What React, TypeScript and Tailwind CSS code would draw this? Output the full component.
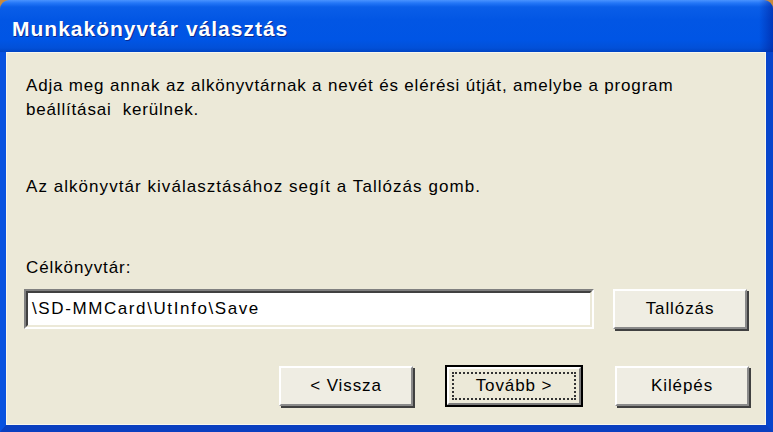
import React from "react";

function ClassicButton({
  label,
  def = false,
  className = "",
}: {
  label: string;
  def?: boolean;
  className?: string;
}) {
  if (def) {
    return (
      <div className={"h-[42px] border-2 border-black bg-[#ECE9D8] " + className}>
        <div className="h-full border-2 border-t-white border-l-white border-b-[#7c7c7c] border-r-[#7c7c7c] p-[3px]">
          <div className="flex h-full items-center justify-center border-2 border-dotted border-[#333] text-[17px] text-black">
            {label}
          </div>
        </div>
      </div>
    );
  }
  return (
    <div
      className={
        "flex h-[40px] items-center justify-center border-2 border-t-white border-l-white border-b-[#8a8a8a] border-r-[#8a8a8a] bg-[#EFEDE3] text-[17px] text-black shadow-[2px_2px_0_#404040] " +
        className
      }
    >
      {label}
    </div>
  );
}

export default function App() {
  return (
    <div
      className="flex h-[432px] w-[773px] flex-col bg-[#c98a3c] tracking-[0.9px]"
      style={{ fontFamily: '"Liberation Sans", Arial, sans-serif' }}
    >
      {/* Title bar */}
      <div className="relative flex h-[52px] items-center rounded-t-[9px] bg-[linear-gradient(180deg,#4a93ff_0px,#2477f7_3px,#0a5ee8_7px,#0256e4_20px,#0055e5_40px,#0250d8_48px,#0044c4_52px)] pl-[12px] pt-[6px]">
        <div className="absolute inset-y-0 right-0 w-[14px] rounded-tr-[9px] bg-[linear-gradient(90deg,rgba(0,40,170,0)_0%,rgba(0,30,150,0.55)_100%)]" />
        <span className="text-[21px] font-bold tracking-[1px] text-white [text-shadow:1px_1px_0_#0b2a8f]">
          Munkakönyvtár választás
        </span>
      </div>
      {/* Frame */}
      <div className="flex flex-1 flex-col border-l-[6px] border-r-[7px] border-b-[7px] border-l-[#0852e0] border-r-[#0745cc] border-b-[#0a3fc0]">
        <div className="flex flex-1 flex-col border border-[#f8f6ee] bg-[#ECE9D8] pl-[19px] pr-[16px] pt-[21px] text-[17px] leading-[24px] text-black">
          <p className="whitespace-nowrap tracking-[0.82px]">
            Adja meg annak az alkönyvtárnak a nevét és elérési útját, amelybe a program
            <br />
            beállításai&nbsp; kerülnek.
          </p>
          <p className="mt-[53px] tracking-[1.05px]">Az alkönyvtár kiválasztásához segít a Tallózás gomb.</p>
          <p className="mt-[57px]">Célkönyvtár:</p>
          <div className="mt-[9px] flex items-center">
            <div className="-ml-[2px] h-[40px] w-[570px] border-2 border-t-[#808080] border-l-[#808080] border-b-white border-r-white">
              <div className="flex h-full items-center border-2 border-t-[#404040] border-l-[#404040] border-b-[#ECE9D8] border-r-[#ECE9D8] bg-white pl-[4px] tracking-[1.6px]">
                \SD-MMCard\UtInfo\Save
              </div>
            </div>
            <ClassicButton label="Tallózás" className="ml-[19px] w-[134px]" />
          </div>
          <div className="mt-[36px] flex items-center justify-end">
            <ClassicButton label="< Vissza" className="w-[134px]" />
            <ClassicButton label="Tovább >" def className="ml-[32px] w-[138px]" />
            <ClassicButton label="Kilépés" className="ml-[32px] w-[134px]" />
          </div>
        </div>
      </div>
    </div>
  );
}
